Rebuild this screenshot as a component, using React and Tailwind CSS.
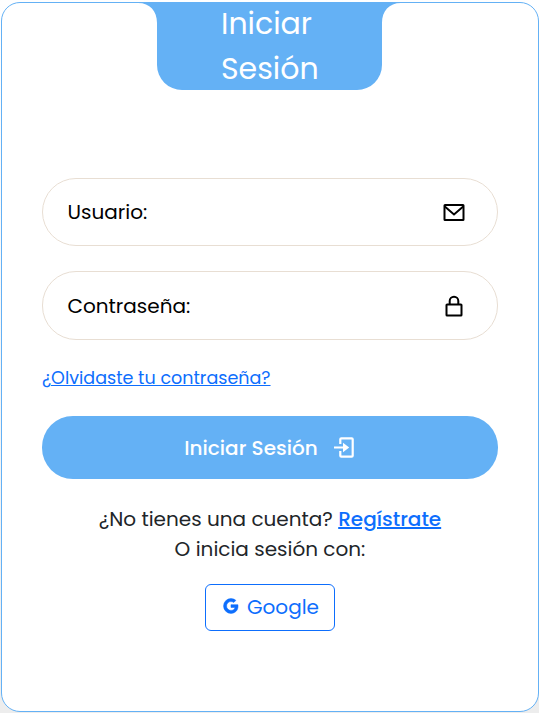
import { BiLogoGoogle } from "react-icons/bi";

function Envelope() {
  return (
    <svg width="24" height="24" viewBox="0 0 24 24" fill="none" stroke="currentColor" strokeWidth="2">
      <rect x="2.5" y="5" width="19" height="15" rx="0.5" />
      <path d="M2.8 6.6L12 14.400L21.2 6.6" />
    </svg>
  );
}

function Lock() {
  return (
    <svg width="24" height="24" viewBox="0 0 24 24" fill="none" stroke="currentColor" strokeWidth="2">
      <rect x="4.5" y="10.5" width="15" height="11" rx="0.6" />
      <path d="M7.7 10.5V7.1a4.3 4.3 0 0 1 8.6 0v3.4" />
    </svg>
  );
}

function Enter() {
  return (
    <svg width="24" height="24" viewBox="0 0 24 24" fill="none" stroke="currentColor" strokeWidth="2.200" className="ml-[14px]">
      <path d="M8.3 8V3.3a1 1 0 0 1 1-1h10.4a1 1 0 0 1 1 1v16.4a1 1 0 0 1-1 1H9.300a1 1 0 0 1-1-1V15M2 11.500h10" />
      <path d="M11 6.800L17.200 11.500L11 16.200Z" fill="currentColor" stroke="none" />
    </svg>
  );
}

function Field({ label, icon: Icon, className }) {
  return (
    <label className={`flex items-center justify-between rounded-[34px] border border-[#e8ded3] pl-[24.5px] pr-[31px] text-black ${className}`}>
      <span className="text-[20px] leading-[30px]">{label}</span>
      <Icon />
    </label>
  );
}

function Header() {
  return (
    <header className="flex h-[87px] items-start justify-center pr-px">
      <svg width="20" height="20" className="-mr-px shrink-0" viewBox="0 0 20 20">
        <path d="M0 0H20V20H19C19 8 12 0 0 0Z" fill="#64b1f5" />
      </svg>
      <h1 className="-mt-px flex h-[88px] w-[225px] flex-col rounded-b-[25px] bg-[#64b1f5] pl-[64px] text-[30px] leading-[45px] text-white">
        <span className="-mt-px whitespace-nowrap">Iniciar</span>
        <span className="whitespace-nowrap">Sesión</span>
      </h1>
      <svg width="20" height="20" className="-ml-px shrink-0" viewBox="0 0 20 20">
        <path d="M20 0H0V20H1C1 8 8 0 20 0Z" fill="#64b1f5" />
      </svg>
    </header>
  );
}

export default function App() {
  return (
    <div className="h-[713px] w-[539px] bg-linear-to-b from-white to-[#ededed] pl-px pt-[2px] font-[Poppins,Inter,sans-serif] text-[#212529]">
      <main className="h-[710px] w-[538px] overflow-hidden rounded-[19px] border border-[#64b1f5] bg-white">
        <Header />
        <div className="flex flex-col px-10 pt-[88px]">
          <Field label="Usuario:" icon={Envelope} className="h-[68px]" />
          <Field label="Contraseña:" icon={Lock} className="mt-[25px] h-[69px]" />
          <a href="#" className="mt-[25px] self-start whitespace-nowrap text-[17.550px] leading-[26px] text-[#0d6efd] underline">
            ¿Olvidaste tu contraseña?
          </a>
          <button className="mt-[25px] flex h-[63px] items-center justify-center rounded-[31px] bg-[#64b1f5] text-[20px] font-medium text-white">
            <span className="whitespace-nowrap">Iniciar Sesión</span>
            <Enter />
          </button>
          <div className="mt-[25px] flex flex-col items-center whitespace-nowrap text-[20px] leading-[30px]">
            <p>
              ¿No tienes una cuenta?{" "}
              <a href="#" className="font-medium text-[#0d6efd] underline">Regístrate</a>
            </p>
            <p>O inicia sesión con:</p>
          </div>
          <button className="mt-[20px] flex h-[47px] w-[130px] items-center justify-center self-center rounded-[6px] border border-[#0d6efd] pb-px text-[20px] text-[#0d6efd]">
            <BiLogoGoogle size={20} stroke="currentColor" strokeWidth="0.6" className="-mt-[3px] mr-[6px]" />
            <span>Google</span>
          </button>
        </div>
      </main>
    </div>
  );
}
